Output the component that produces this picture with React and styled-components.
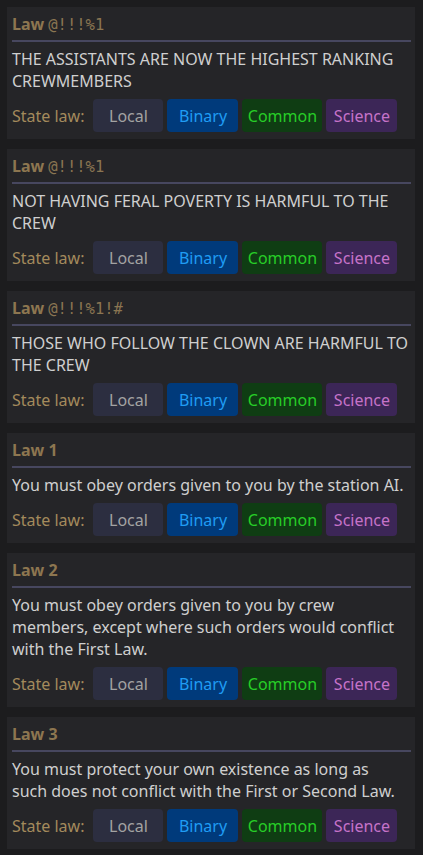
import React from "react";
import styled, { createGlobalStyle } from "styled-components";

const Global = createGlobalStyle`
  html, body { margin: 0; padding: 0; background: #1c1c1e; }
  body { font-family: "Noto Sans", "DejaVu Sans", sans-serif; }
`;

const Page = styled.div`
  display: flex;
  flex-direction: column;
  gap: 10px;
  padding: 7px 8px 7px 7px;
  background: #1c1c1e;
  min-height: 855px;
  box-sizing: border-box;
`;

const Card = styled.section`
  background: #252528;
  padding: 6px 4px 7px 5px;
  display: flex;
  flex-direction: column;
`;

const Header = styled.div`
  height: 22px;
  line-height: 22px;
  padding-bottom: 5px;
  border-bottom: 2px solid #47475f;
  color: #8d7650;
  font-size: 16px;
  font-weight: 700;
  white-space: nowrap;
  overflow: hidden;
`;

const Suffix = styled.span`
  font-family: "DejaVu Sans Mono", monospace;
  font-weight: 400;
  font-size: 15.5px;
  line-height: 1;
  margin-left: 4px;
  color: #8a7552;
`;

const Body = styled.div`
  margin-top: 6px;
  font-size: 16px;
  line-height: 22px;
  color: #cfcfcf;
`;

const Row = styled.div`
  margin-top: 7px;
  display: flex;
  align-items: center;
  gap: 4px;
`;

const Label = styled.span`
  font-size: 16px;
  color: #a38a5c;
  margin-right: 5px;
  white-space: nowrap;
`;

const tones = {
  local: { bg: "#2c2e40", fg: "#a3a3a3", w: 70 },
  binary: { bg: "#003a7b", fg: "#1f9cf4", w: 71 },
  common: { bg: "#0f3d13", fg: "#27cd27", w: 80 },
  science: { bg: "#3c2657", fg: "#c673c9", w: 71 },
};

const Btn = styled.button`
  all: unset;
  box-sizing: border-box;
  flex: none;
  height: 33px;
  width: ${(p) => tones[p.$tone].w}px;
  display: flex;
  align-items: center;
  justify-content: center;
  border-radius: 4px;
  font-family: "Noto Sans", sans-serif;
  font-size: 16px;
  background: ${(p) => tones[p.$tone].bg};
  color: ${(p) => tones[p.$tone].fg};
`;

const laws = [
  { title: "Law", suffix: "@!!!%1", text: "THE ASSISTANTS ARE NOW THE HIGHEST RANKING CREWMEMBERS" },
  { title: "Law", suffix: "@!!!%1", text: "NOT HAVING FERAL POVERTY IS HARMFUL TO THE CREW" },
  { title: "Law", suffix: "@!!!%1!#", text: "THOSE WHO FOLLOW THE CLOWN ARE HARMFUL TO THE CREW" },
  { title: "Law 1", text: "You must obey orders given to you by the station AI." },
  { title: "Law 2", text: "You must obey orders given to you by crew members, except where such orders would conflict with the First Law." },
  {
    title: "Law 3",
    text: (
      <>
        You must protect your own existence as long as
        <br />
        such does not conflict with the First or Second Law.
      </>
    ),
  },
];

export default function App() {
  return (
    <>
      <Global />
      <Page>
        {laws.map((l, i) => (
          <Card key={i}>
            <Header>
              {l.title}
              {l.suffix && <Suffix>{l.suffix}</Suffix>}
            </Header>
            <Body>{l.text}</Body>
            <Row>
              <Label>State law:</Label>
              <Btn $tone="local">Local</Btn>
              <Btn $tone="binary">Binary</Btn>
              <Btn $tone="common">Common</Btn>
              <Btn $tone="science">Science</Btn>
            </Row>
          </Card>
        ))}
      </Page>
    </>
  );
}
